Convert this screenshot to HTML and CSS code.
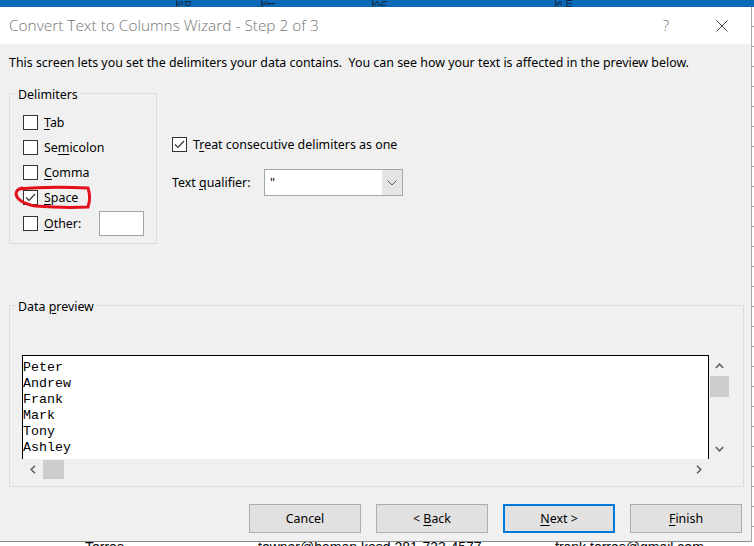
FILE: index.html
```html
<!DOCTYPE html>
<html lang="en">

<head>
    <meta charset="UTF-8">
    <meta name="viewport" content="width=device-width, initial-scale=1.0">
    <title>Convert Text to Columns Wizard</title>
    <link rel="stylesheet" href="styles.css">
</head>

<body>
    <!-- Phần đầu bảng tính phía sau hộp thoại -->
    <div class="sheet-top">
        <span class="hdr hdr-a"></span>
        <span class="hdr hdr-b"><i>s</i><i>ɑ</i></span>
        <span class="hdr hdr-c"><i>s</i><i>t</i></span>
        <span class="hdr hdr-d"><i>s</i><i>h</i></span>
        <span class="hdr hdr-e"><i>s</i><i>m</i></span>
    </div>

    <div class="screen">
        <div class="dialog">
            <div class="titlebar">
                <span class="title">Convert Text to Columns Wizard - Step 2 of 3</span>
                <span class="tb-btn help">?</span>
                <span class="tb-btn close">
                    <svg width="12" height="12" viewBox="0 0 12 12">
                        <path d="M0.5 0.5 L11.5 11.5 M11.5 0.5 L0.5 11.5" stroke="#444" stroke-width="1" fill="none" />
                    </svg>
                </span>
            </div>

            <div class="dlg-body">
                <p class="intro">This screen lets you set the delimiters your data contains.&nbsp; You can see how your text is affected in the preview below.</p>

                <div class="options">
                    <div class="group delimiters">
                        <div class="group-title">Delimiters</div>
                        <div class="delim-list">
                            <label class="check-row"><span class="box"></span><span><u>T</u>ab</span></label>
                            <label class="check-row"><span class="box"></span><span>Se<u>m</u>icolon</span></label>
                            <label class="check-row"><span class="box"></span><span><u>C</u>omma</span></label>
                            <label class="check-row"><span class="box checked"><svg width="13" height="13" viewBox="0 0 13 13"><path d="M2 6.5 L5 9.5 L11 3" stroke="#333" stroke-width="1.2" fill="none" /></svg></span><span><u>S</u>pace</span></label>
                            <label class="check-row other-row"><span class="box"></span><span><u>O</u>ther:</span><span class="other-input"></span></label>
                        </div>
                        <!-- Vòng tròn đỏ vẽ tay quanh "Space" -->
                        <svg class="scribble" width="84" height="30" viewBox="0 0 84 30">
                            <path d="M6 5 C 25 3, 55 3, 75 4 C 77 10, 77 17, 75 23 C 55 24, 35 23, 22 22 C 12 20, 4 16, 3 10 C 3 7, 5 5, 9 4" stroke="#e3101b" stroke-width="3" stroke-linecap="round" fill="none" />
                        </svg>
                    </div>

                    <div class="right-opts">
                        <label class="check-row treat-row"><span class="box checked"><svg width="13" height="13" viewBox="0 0 13 13"><path d="M2 6.5 L5 9.5 L11 3" stroke="#333" stroke-width="1.2" fill="none" /></svg></span><span>T<u>r</u>eat consecutive delimiters as one</span></label>
                        <div class="qualifier-row">
                            <span class="qualifier-label">Text <u>q</u>ualifier:</span>
                            <div class="combo">
                                <span class="combo-value">"</span>
                                <span class="combo-btn">
                                    <svg width="10" height="6" viewBox="0 0 10 6"><path d="M0.5 0.5 L5 5 L9.5 0.5" stroke="#555" stroke-width="1" fill="none" /></svg>
                                </span>
                            </div>
                        </div>
                    </div>
                </div>

                <div class="group preview-group">
                    <div class="group-title">Data <u>p</u>review</div>
                    <div class="preview-wrap">
                        <div class="preview-box">Peter
Andrew
Frank
Mark
Tony
Ashley</div>
                        <div class="vscroll">
                            <span class="arrow"><svg width="9" height="6" viewBox="0 0 9 6"><path d="M0.8 5 L4.5 1.2 L8.2 5" stroke="#606060" stroke-width="1.6" fill="none" /></svg></span>
                            <span class="thumb"></span>
                            <span class="spacer"></span>
                            <span class="arrow"><svg width="9" height="6" viewBox="0 0 9 6"><path d="M0.8 1 L4.5 4.8 L8.2 1" stroke="#606060" stroke-width="1.6" fill="none" /></svg></span>
                        </div>
                        <div class="hscroll">
                            <span class="arrow"><svg width="6" height="9" viewBox="0 0 6 9"><path d="M5 0.8 L1.2 4.5 L5 8.2" stroke="#606060" stroke-width="1.6" fill="none" /></svg></span>
                            <span class="thumb"></span>
                            <span class="spacer"></span>
                            <span class="arrow"><svg width="6" height="9" viewBox="0 0 6 9"><path d="M1 0.8 L4.8 4.5 L1 8.2" stroke="#606060" stroke-width="1.6" fill="none" /></svg></span>
                        </div>
                        <div class="corner"></div>
                    </div>
                </div>

                <div class="buttons">
                    <button class="btn">Cancel</button>
                    <button class="btn">&lt; <u>B</u>ack</button>
                    <button class="btn default"><u>N</u>ext &gt;</button>
                    <button class="btn"><u>F</u>inish</button>
                </div>
            </div>
        </div>
        <div class="sheet-edge"></div>
    </div>

    <!-- Dòng bảng tính lộ ra dưới hộp thoại -->
    <div class="sheet-row">
        <div class="sheet-cells">
            <span class="cell c1">Torres</span>
            <span class="cell c2">towner@haman.kesd 281-733-4577</span>
            <span class="cell c3">frank.torres@gmail.com</span>
        </div>
    </div>
</body>

</html>
```

FILE: styles.css
```css
* {
    box-sizing: border-box;
}

body {
    margin: 0;
    width: 754px;
    height: 546px;
    overflow: hidden;
    background: #fff;
    font-family: "Noto Sans", "Open Sans", sans-serif;
    font-size: 12.4px;
    color: #000;
}

u {
    text-underline-offset: 2px;
}

/* Thanh tiêu đề cột của Excel */
.sheet-top {
    height: 7px;
    background: #0b6ab7;
    display: flex;
    overflow: hidden;
}

.hdr {
    display: flex;
    gap: 3px;
    height: 7px;
    border-left: 1px solid #12385a;
    padding-left: 2px;
}

.hdr i {
    font-style: normal;
    font-family: "Liberation Sans", sans-serif;
    font-size: 10px;
    line-height: 4px;
    color: #10233a;
    display: inline-block;
    transform: rotate(-90deg);
}

.hdr-a {
    width: 176px;
    border-left: none;
}

.hdr-b {
    width: 85px;
}

.hdr-c {
    width: 111px;
}

.hdr-d {
    width: 183px;
}

.hdr-e {
    flex: 1;
}

.screen {
    display: flex;
    height: 535px;
}

.dialog {
    width: 752px;
    display: flex;
    flex-direction: column;
    border-right: 1px solid #a8a8a8;
    border-bottom: 1px solid #8c8c8c;
}

.sheet-edge {
    flex: 1;
    background: repeating-linear-gradient(to bottom, #fff 0 19px, #9a9a9a 19px 20px);
}

/* Thanh tiêu đề hộp thoại */
.titlebar {
    height: 37px;
    background: #fff;
    display: flex;
    align-items: center;
    padding-left: 9px;
}

.title {
    flex: 1;
    font-family: "Open Sans", sans-serif;
    font-weight: 300;
    font-size: 15.4px;
    color: #767676;
}

.tb-btn {
    width: 56px;
    display: flex;
    justify-content: center;
    align-items: center;
}

.help {
    font-family: "Open Sans", sans-serif;
    font-weight: 300;
    font-size: 15.4px;
    color: #767676;
}

.close {
    margin-right: 1px;
}

.dlg-body {
    flex: 1;
    background: #f0f0f0;
    padding: 10px 9px 0 9px;
}

.intro {
    margin: 0;
    line-height: 16px;
    padding-top: 1px;
    height: 16px;
}

.options {
    display: flex;
    margin-top: 23px;
}

.group {
    border: 1px solid #dcdcdc;
    position: relative;
}

.group-title {
    width: fit-content;
    margin: -7px 0 0 6px;
    padding: 0 2px;
    background: #f0f0f0;
    line-height: 16px;
}

.delimiters {
    width: 148px;
    height: 151px;
}

.delim-list {
    padding: 7px 12px 0 13px;
}

.check-row {
    display: flex;
    align-items: center;
    height: 25px;
}

.other-row {
    height: 27px;
}

.box {
    width: 15px;
    height: 15px;
    border: 1px solid #333;
    background: #fff;
    margin-right: 6px;
    display: flex;
    align-items: center;
    justify-content: center;
    flex-shrink: 0;
}

.other-input {
    margin-left: auto;
    width: 45px;
    height: 25px;
    border: 1px solid #a3a3a3;
    background: #fff;
}

.scribble {
    position: absolute;
    left: 3px;
    top: 90px;
}

.right-opts {
    margin-left: 15px;
}

.treat-row {
    height: 16px;
    margin-top: 43px;
}

.qualifier-row {
    display: flex;
    align-items: center;
    margin-top: 17px;
}

.qualifier-label {
    width: 92px;
}

.combo {
    width: 139px;
    height: 27px;
    border: 1px solid #a6a6a6;
    background: #fff;
    display: flex;
}

.combo-value {
    flex: 1;
    padding: 4px 0 0 5px;
}

.combo-btn {
    width: 20px;
    background: #e5e5e5;
    display: flex;
    align-items: center;
    justify-content: center;
}

/* Khung xem trước dữ liệu */
.preview-group {
    width: 735px;
    height: 182px;
    margin-top: 61px;
}

.preview-wrap {
    display: grid;
    grid-template-columns: 687px 20px;
    grid-template-rows: 104px 20px;
    margin: 40px 0 0 12px;
}

.preview-box {
    border: 1px solid #000;
    border-bottom: none;
    background: #fff;
    font-family: "Liberation Mono", "Courier New", monospace;
    font-size: 13.33px;
    line-height: 16px;
    padding-top: 4px;
    white-space: pre;
    overflow: hidden;
}

.vscroll {
    display: flex;
    flex-direction: column;
    align-items: center;
}

.vscroll .arrow {
    height: 21px;
    display: flex;
    align-items: center;
}

.vscroll .thumb {
    width: 19px;
    height: 21px;
    background: #cdcdcd;
}

.spacer {
    flex: 1;
}

.hscroll {
    display: flex;
    align-items: center;
}

.hscroll .arrow {
    width: 21px;
    display: flex;
    justify-content: center;
}

.hscroll .arrow:last-child {
    width: 20px;
}

.hscroll .thumb {
    width: 21px;
    height: 19px;
    background: #cdcdcd;
}

/* Hàng nút */
.buttons {
    display: flex;
    justify-content: flex-end;
    gap: 15px;
    margin-top: 17px;
}

.btn {
    width: 112px;
    height: 29px;
    background: #e1e1e1;
    border: 1px solid #adadad;
    font-family: "Noto Sans", "Open Sans", sans-serif;
    font-size: 12.4px;
    color: #000;
    padding: 0;
}

.btn.default {
    border: 2px solid #0078d7;
}

.sheet-row {
    height: 4px;
    overflow: hidden;
}

.sheet-cells {
    display: flex;
    margin-top: -3px;
    padding-left: 85px;
    font-family: "Liberation Sans", sans-serif;
    font-size: 14px;
    line-height: 16px;
}

.c1 {
    width: 173px;
}

.c2 {
    width: 297px;
}
```
